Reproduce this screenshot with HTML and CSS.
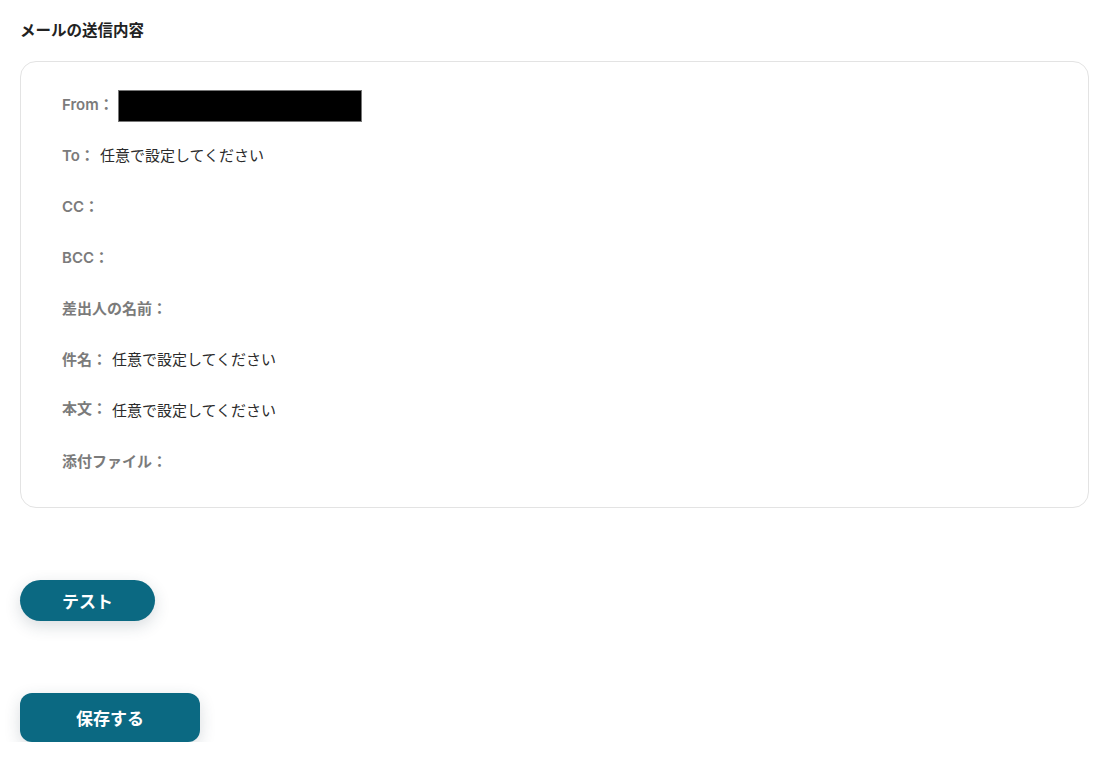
FILE: index.html
```html
<!DOCTYPE html>
<html lang="ja">
<head>
  <meta charset="UTF-8">
  <title>メールの送信内容</title>
  <link rel="stylesheet" href="styles.css">
</head>
<body>
  <div class="page">
    <h3 class="section-title">メールの送信内容</h3>

    <div class="mail-box">
      <div class="row">
        <span class="label">From：</span>
        <span class="redact"></span>
      </div>
      <div class="row">
        <span class="label">To：</span>
        <span class="value">任意で設定してください</span>
      </div>
      <div class="row">
        <span class="label">CC：</span>
      </div>
      <div class="row">
        <span class="label">BCC：</span>
      </div>
      <div class="row">
        <span class="label">差出人の名前：</span>
      </div>
      <div class="row">
        <span class="label">件名：</span>
        <span class="value">任意で設定してください</span>
      </div>
      <div class="row row-body">
        <span class="label">本文：</span>
        <span class="value">任意で設定してください</span>
      </div>
      <div class="row">
        <span class="label">添付ファイル：</span>
      </div>
    </div>

    <div class="actions">
      <button class="btn btn-test">テスト</button>
      <button class="btn btn-save">保存する</button>
    </div>
  </div>
</body>
</html>
```

FILE: styles.css
```css
:root {
  --main: #0b6982;
  --text: #2b2b2b;
  --label: #7b7b7b;
  --line: #e3e3e3;
}
html, body {
  margin: 0;
  background: #fff;
  font-family: Inter, "Noto Sans CJK JP", sans-serif;
  color: var(--text);
}
.page { padding: 20px 20px 0 20px; }

.section-title {
  margin: 0;
  font-size: 15.5px;
  font-weight: 700;
  line-height: 22px;
  color: #222;
}

.mail-box {
  margin-top: 19px;
  width: 1069px;
  border: 1px solid var(--line);
  border-radius: 16px;
  padding: 16px 0 21px 41px;
  box-sizing: border-box;
  display: flex;
  flex-direction: column;
}
.row {
  height: 51px;
  display: flex;
  align-items: center;
}
.label {
  font-size: 15px;
  font-weight: 600;
  color: var(--label);
}
.value {
  margin-left: 5px;
  font-size: 15px;
  color: var(--text);
}
.row-body .label { margin-top: -4px; }
.redact {
  align-self: flex-start;
  width: 244px;
  height: 32px;
  margin: 12px 0 0 4px;
  background: #000;
  border: 1px solid #777;
  box-sizing: border-box;
}

.actions {
  display: flex;
  flex-direction: column;
  align-items: flex-start;
  gap: 72px;
  margin-top: 72px;
}
.btn {
  border: none;
  background: var(--main);
  color: #fff;
  font-family: inherit;
  font-weight: 600;
  font-size: 17px;
  cursor: pointer;
  box-shadow: 0 5px 16px rgba(40, 60, 80, 0.18);
}
.btn-test {
  width: 135px;
  height: 41px;
  border-radius: 21px;
}
.btn-save {
  width: 180px;
  height: 49px;
  border-radius: 12px;
}
```
